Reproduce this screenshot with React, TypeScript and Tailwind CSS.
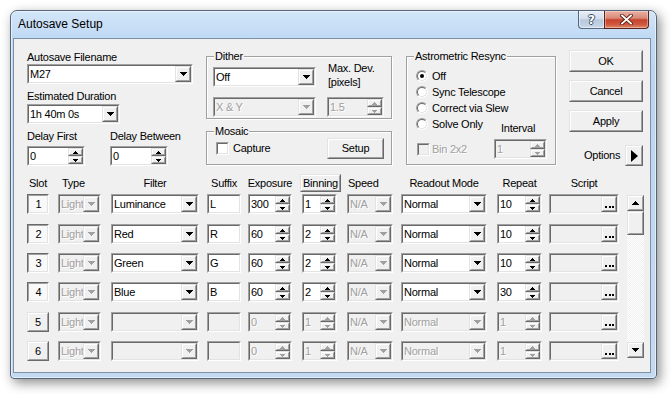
import React from "react";

type P = { className?: string; inner?: string; children?: React.ReactNode };

const DIS = "text-[#a0a0a0] [text-shadow:1px_1px_0_#fff]";

function TriDown({ c = "#000" }: { c?: string }) {
  return (
    <svg width="7" height="4" shapeRendering="crispEdges" className="block">
      <g fill={c}>
        <rect x="0" y="0" width="7" height="1" />
        <rect x="1" y="1" width="5" height="1" />
        <rect x="2" y="2" width="3" height="1" />
        <rect x="3" y="3" width="1" height="1" />
      </g>
    </svg>
  );
}

function TriUp({ c = "#000" }: { c?: string }) {
  return (
    <svg width="7" height="4" shapeRendering="crispEdges" className="block">
      <g fill={c}>
        <rect x="3" y="0" width="1" height="1" />
        <rect x="2" y="1" width="3" height="1" />
        <rect x="1" y="2" width="5" height="1" />
        <rect x="0" y="3" width="7" height="1" />
      </g>
    </svg>
  );
}

function SmallUp({ c = "#000" }: { c?: string }) {
  return (
    <svg width="5" height="3" shapeRendering="crispEdges" className="block">
      <g fill={c}>
        <rect x="2" y="0" width="1" height="1" />
        <rect x="1" y="1" width="3" height="1" />
        <rect x="0" y="2" width="5" height="1" />
      </g>
    </svg>
  );
}

function SmallDown({ c = "#000" }: { c?: string }) {
  return (
    <svg width="5" height="3" shapeRendering="crispEdges" className="block">
      <g fill={c}>
        <rect x="0" y="0" width="5" height="1" />
        <rect x="1" y="1" width="3" height="1" />
        <rect x="2" y="2" width="1" height="1" />
      </g>
    </svg>
  );
}

function Sunken({ className = "", inner = "", children }: P) {
  return (
    <div className={"shrink-0 border border-t-[#a0a0a0] border-l-[#a0a0a0] border-r-white border-b-white " + className}>
      <div className={"h-full flex border border-t-[#696969] border-l-[#696969] border-r-[#e3e3e3] border-b-[#e3e3e3] " + inner}>
        {children}
      </div>
    </div>
  );
}

function Raised({ className = "", inner = "", children }: P) {
  return (
    <div className={"shrink-0 border border-t-[#e3e3e3] border-l-[#e3e3e3] border-r-[#696969] border-b-[#696969] " + className}>
      <div className={"h-full flex items-center justify-center bg-[#f0f0f0] border border-t-white border-l-white border-r-[#a0a0a0] border-b-[#a0a0a0] " + inner}>
        {children}
      </div>
    </div>
  );
}

function Combo({ w, text = "", disabled = false }: { w: string; text?: string; disabled?: boolean }) {
  return (
    <Sunken className={"h-[20px] " + w} inner={disabled ? "bg-[#f0f0f0]" : "bg-white"}>
      <div className={"flex-1 min-w-0 pl-[1px] flex items-center whitespace-nowrap overflow-hidden " + (disabled ? DIS : "")}>
        {text}
      </div>
      <Raised className="w-[16px] h-full">
        <TriDown c={disabled ? "#a0a0a0" : "#000"} />
      </Raised>
    </Sunken>
  );
}

function Spin({ w, text = "", disabled = false }: { w: string; text?: string; disabled?: boolean }) {
  const c = disabled ? "#a0a0a0" : "#000";
  return (
    <Sunken className={"h-[20px] " + w} inner={disabled ? "bg-[#f0f0f0]" : "bg-white"}>
      <div className={"flex-1 min-w-0 pl-[1px] flex items-center whitespace-nowrap overflow-hidden " + (disabled ? DIS : "")}>
        {text}
      </div>
      <div className="w-[15px] h-full flex flex-col">
        <Raised className="flex-1 min-h-0">
          <SmallUp c={c} />
        </Raised>
        <Raised className="flex-1 min-h-0">
          <SmallDown c={c} />
        </Raised>
      </div>
    </Sunken>
  );
}

function Check({ disabled = false }: { disabled?: boolean }) {
  return <Sunken className="w-[13px] h-[13px]" inner={disabled ? "bg-[#f0f0f0]" : "bg-white"} />;
}

function Radio({ checked = false }: { checked?: boolean }) {
  return (
    <div className="w-[12px] h-[12px] shrink-0 rounded-full border border-t-[#a0a0a0] border-l-[#a0a0a0] border-r-white border-b-white">
      <div className="w-full h-full rounded-full border border-t-[#696969] border-l-[#696969] border-r-[#e3e3e3] border-b-[#e3e3e3] bg-white flex items-center justify-center">
        {checked && <div className="w-[4px] h-[4px] rounded-full bg-black" />}
      </div>
    </div>
  );
}

function Group({ title, className = "", children }: { title: string; className?: string; children?: React.ReactNode }) {
  return (
    <div className={"relative shrink-0 border border-[#a0a0a0] shadow-[inset_1px_1px_0_#fff,1px_1px_0_#fff] " + className}>
      <div className="absolute -top-[7px] left-[7px] px-[1px] bg-[#f0f0f0] leading-[13px] whitespace-nowrap">{title}</div>
      {children}
    </div>
  );
}

const rows = [
  { n: "1", on: true, filter: "Luminance", suf: "L", exp: "300", bin: "1", rep: "10" },
  { n: "2", on: true, filter: "Red", suf: "R", exp: "60", bin: "2", rep: "10" },
  { n: "3", on: true, filter: "Green", suf: "G", exp: "60", bin: "2", rep: "10" },
  { n: "4", on: true, filter: "Blue", suf: "B", exp: "60", bin: "2", rep: "30" },
  { n: "5", on: false, filter: "", suf: "", exp: "0", bin: "1", rep: "1" },
  { n: "6", on: false, filter: "", suf: "", exp: "0", bin: "1", rep: "1" },
];
const rowMt = ["", "mt-[10px]", "mt-[9px]", "mt-[9px]", "mt-[10px]", "mt-[9px]"];

function Row({ r, mt }: { r: (typeof rows)[number]; mt: string }) {
  const d = !r.on;
  return (
    <div className={"flex items-center h-[20px] " + mt}>
      {r.on ? (
        <div className="shrink-0 w-[22px] h-[20px] border border-t-[#696969] border-l-[#696969] border-r-white border-b-white">
          <div className="h-full border border-t-[#a0a0a0] border-l-[#a0a0a0] border-r-[#e3e3e3] border-b-[#e3e3e3] bg-[#f9f9f9] flex items-center justify-center pl-[1px] pt-[1px]">
            {r.n}
          </div>
        </div>
      ) : (
        <Raised className="w-[22px] h-[20px]">{r.n}</Raised>
      )}
      <div className="ml-[9px]">
        <Combo w="w-[43px]" text="Light" disabled />
      </div>
      <div className="ml-[10px]">
        <Combo w="w-[88px]" text={r.filter} disabled={d} />
      </div>
      <div className="ml-[8px]">
        <Sunken className="h-[20px] w-[34px]" inner={d ? "bg-[#f0f0f0]" : "bg-white"}>
          <div className="pl-[1px] flex items-center">{r.suf}</div>
        </Sunken>
      </div>
      <div className="ml-[7px]">
        <Spin w="w-[44px]" text={r.exp} disabled={d} />
      </div>
      <div className="ml-[10px]">
        <Spin w="w-[35px]" text={r.bin} disabled={d} />
      </div>
      <div className="ml-[10px]">
        <Combo w="w-[46px]" text="N/A" disabled />
      </div>
      <div className="ml-[8px]">
        <Combo w="w-[86px]" text="Normal" disabled={d} />
      </div>
      <div className="ml-[10px]">
        <Spin w="w-[45px]" text={r.rep} disabled={d} />
      </div>
      <div className="ml-[7px]">
        <Sunken className="h-[20px] w-[70px]" inner="bg-[#f0f0f0] justify-end">
          <Raised className="w-[16px] h-full" inner="items-end pb-[2px]">
            <svg width="9" height="2" shapeRendering="crispEdges" className="block">
              <g fill="#000">
                <rect x="0" y="0" width="2" height="2" />
                <rect x="3.5" y="0" width="2" height="2" />
                <rect x="7" y="0" width="2" height="2" />
              </g>
            </svg>
          </Raised>
        </Sunken>
      </div>
    </div>
  );
}

export default function App() {
  return (
    <div className="w-[671px] h-[394px] bg-white overflow-hidden font-['Liberation_Sans',Arial,sans-serif] text-[11px] leading-[13px] tracking-[-0.25px] text-black pt-[10px] pl-[10px]">
      <div className="w-[647px] h-[369px] rounded-t-[7px] rounded-b-[4px] border border-[#52657c] bg-[linear-gradient(180deg,#d3e6f9_0px,#c0d9f4_26px,#bcd5ef_60px,#c4daf1_100%)] shadow-[3px_4px_12px_rgba(0,0,0,0.45),inset_0_0_0_1px_rgba(255,255,255,0.55)] flex flex-col">
        {/* Title bar */}
        <div className="h-[27px] flex items-start shrink-0">
          <div className="pl-[7px] pt-[6px] text-[12px] leading-[14px] tracking-normal whitespace-nowrap">Autosave Setup</div>
          <div className="ml-auto mr-[7px] flex">
            <div className="w-[26px] h-[18px] rounded-bl-[4px] border border-t-0 border-r-0 border-[#56687f] bg-[linear-gradient(180deg,#e6eef8_0%,#d3deec_45%,#b7c8dd_52%,#c9d8ea_100%)] flex items-center justify-center shadow-[inset_0_0_0_1px_rgba(255,255,255,0.5)]">
              <span className="font-['DejaVu_Sans',sans-serif] font-bold text-[12px] leading-none tracking-normal text-white [text-shadow:1px_0_0_#3f4f63,-1px_0_0_#3f4f63,0_1px_0_#3f4f63,0_-1px_0_#3f4f63]">?</span>
            </div>
            <div className="w-[45px] h-[18px] rounded-br-[4px] border border-t-0 border-[#5a2219] bg-[linear-gradient(180deg,#eab0a3_0%,#da8a78_42%,#c5432c_52%,#d0593f_80%,#e08a6c_100%)] flex items-center justify-center shadow-[inset_0_0_0_1px_rgba(255,255,255,0.35)]">
              <svg width="13" height="11" viewBox="0 0 13 11" className="block">
                <path d="M2 1.5 L11 9.5 M11 1.5 L2 9.5" stroke="#5b1d12" strokeWidth="3.6" strokeLinecap="square" />
                <path d="M2 1.5 L11 9.5 M11 1.5 L2 9.5" stroke="#ffffff" strokeWidth="1.8" strokeLinecap="square" />
              </svg>
            </div>
          </div>
        </div>

        {/* Client area */}
        <div className="ml-[2px] mr-[5px] mb-[5px] flex-1 border border-[#7d90a8] bg-[#f0f0f0] flex flex-col">
          {/* Top section */}
          <div className="flex items-start mt-[11px] ml-[13px]">
            {/* Col A */}
            <div className="w-[166px] shrink-0 pt-[1px] flex flex-col">
              <div className="whitespace-nowrap">Autosave Filename</div>
              <Combo w="w-[166px]" text="M27" />
              <div className="mt-[6px] whitespace-nowrap">Estimated Duration</div>
              <div className="mt-[1px]">
                <Combo w="w-[93px]" text="1h 40m 0s" />
              </div>
              <div className="mt-[6px] flex">
                <div className="w-[83px] shrink-0 flex flex-col">
                  <div className="whitespace-nowrap">Delay First</div>
                  <div className="mt-[3px]">
                    <Spin w="w-[58px]" text="0" />
                  </div>
                </div>
                <div className="flex flex-col">
                  <div className="whitespace-nowrap">Delay Between</div>
                  <div className="mt-[3px]">
                    <Spin w="w-[58px]" text="0" />
                  </div>
                </div>
              </div>
            </div>

            {/* Dither + Mosaic */}
            <div className="ml-[13px] mt-[6px] w-[186px] shrink-0 flex flex-col">
              <Group title="Dither" className="h-[63px] pl-[6px] pt-[10px]">
                <div className="flex items-start">
                  <Combo w="w-[103px]" text="Off" />
                  <div className="ml-[12px] -mt-[6px] leading-[14px] whitespace-nowrap">
                    <div>Max. Dev.</div>
                    <div>[pixels]</div>
                  </div>
                </div>
                <div className="flex items-start mt-[8px]">
                  <Combo w="w-[103px]" text="X & Y" disabled />
                  <div className="ml-[11px]">
                    <Spin w="w-[57px]" text="1.5" disabled />
                  </div>
                </div>
              </Group>
              <Group title="Mosaic" className="mt-[12px] h-[34px] pl-[9px] pr-[7px] flex items-center">
                <Check />
                <div className="ml-[4px]">Capture</div>
                <Raised className="ml-auto w-[57px] h-[21px]">Setup</Raised>
              </Group>
            </div>

            {/* Astrometric */}
            <Group title="Astrometric Resync" className="ml-[14px] mt-[6px] w-[150px] h-[109px] flex">
              <div className="w-[87px] shrink-0 pl-[9px] pt-[11px] flex flex-col">
                {[
                  ["Off", true],
                  ["Sync Telescope", false],
                  ["Correct via Slew", false],
                  ["Solve Only", false],
                ].map(([t, c]) => (
                  <div key={t as string} className="h-[16px] flex items-center whitespace-nowrap">
                    <Radio checked={c as boolean} />
                    <span className="ml-[4px]">{t as string}</span>
                  </div>
                ))}
                <div className="h-[16px] mt-[9px] flex items-center whitespace-nowrap pl-[1px]">
                  <Check disabled />
                  <span className={"ml-[2px] " + DIS}>Bin 2x2</span>
                </div>
              </div>
              <div className="flex flex-col pt-[65px]">
                <div className="pl-[7px] whitespace-nowrap">Interval</div>
                <div className="mt-[4px]">
                  <Spin w="w-[53px]" text="1" disabled />
                </div>
              </div>
            </Group>

            {/* Buttons */}
            <div className="ml-[13px] w-[74px] shrink-0 flex flex-col">
              <Raised className="h-[22px] w-[74px]">OK</Raised>
              <Raised className="mt-[8px] h-[22px] w-[74px]">Cancel</Raised>
              <Raised className="mt-[8px] h-[22px] w-[74px]">Apply</Raised>
              <div className="mt-[13px] h-[21px] flex items-center">
                <span className="ml-[15px]">Options</span>
                <Raised className="ml-auto w-[18px] h-[21px]">
                  <svg width="7" height="12" viewBox="0 0 7 12" className="block">
                    <polygon points="0,0 7,6 0,12" fill="#000" />
                  </svg>
                </Raised>
              </div>
            </div>
          </div>

          {/* Table header */}
          <div className="flex items-center h-[18px] mt-[8px] ml-[13px] whitespace-nowrap">
            <div className="w-[22px] shrink-0 flex justify-center">Slot</div>
            <div className="w-[43px] ml-[9px] shrink-0 pl-[4px]">Type</div>
            <div className="w-[88px] ml-[10px] shrink-0 flex justify-center">Filter</div>
            <div className="w-[34px] ml-[8px] shrink-0 flex justify-center">Suffix</div>
            <div className="w-[44px] ml-[7px] shrink-0 flex justify-center">Exposure</div>
            <div className="w-[35px] ml-[10px] shrink-0 h-full">
              <Raised className="w-[41px] h-[18px] -ml-[2px]">Binning</Raised>
            </div>
            <div className="w-[46px] ml-[10px] shrink-0 pl-[1px]">Speed</div>
            <div className="w-[86px] ml-[8px] shrink-0 flex justify-center">Readout Mode</div>
            <div className="w-[45px] ml-[10px] shrink-0 flex justify-center">Repeat</div>
            <div className="w-[70px] ml-[7px] shrink-0 flex justify-center">Script</div>
          </div>

          {/* Rows + scrollbar */}
          <div className="flex items-start mt-[2px] ml-[13px]">
            <div className="flex flex-col">
              {rows.map((r, i) => (
                <Row key={r.n} r={r} mt={rowMt[i]} />
              ))}
            </div>
            <div className="ml-[8px] mt-[1px] w-[17px] h-[163px] flex flex-col shrink-0">
              <Raised className="h-[16px] w-[17px]">
                <TriUp />
              </Raised>
              <Raised className="h-[24px] w-[17px]" />
              <div className="flex-1 bg-[repeating-conic-gradient(#f0f0f0_0%_25%,#ffffff_0%_50%)] bg-[length:2px_2px]" />
              <Raised className="h-[16px] w-[17px]">
                <TriDown />
              </Raised>
            </div>
          </div>
        </div>
      </div>
    </div>
  );
}
